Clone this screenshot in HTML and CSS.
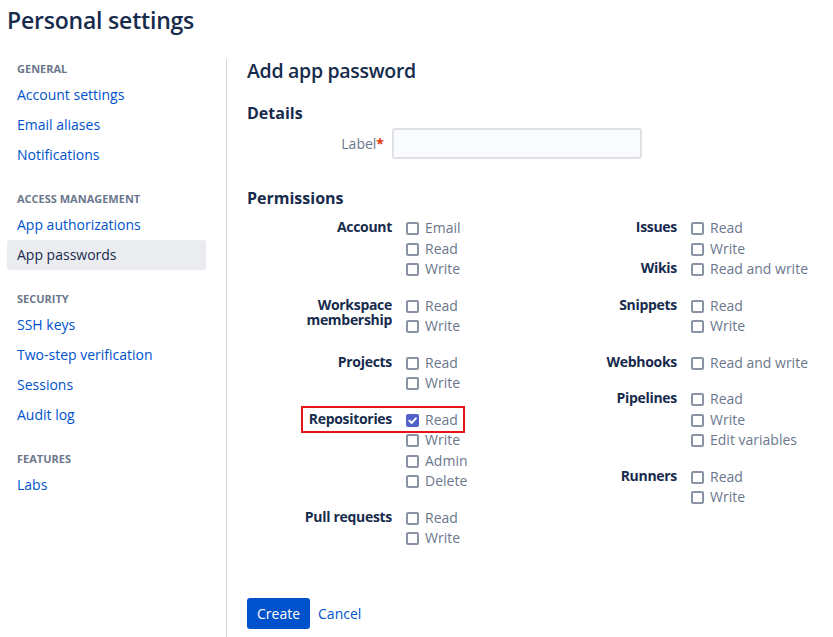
FILE: index.html
```html
<!DOCTYPE html>
<html lang="en">
<head>
<meta charset="utf-8">
<title>Personal settings</title>
<link rel="stylesheet" href="styles.css">
</head>
<body>
<div class="page">
  <h1 class="title">Personal settings</h1>
  <div class="layout">
    <nav class="sidebar">
      <div class="nav-group">
        <div class="nav-heading">General</div>
        <a class="nav-item" href="#">Account settings</a>
        <a class="nav-item" href="#">Email aliases</a>
        <a class="nav-item" href="#">Notifications</a>
      </div>
      <div class="nav-group">
        <div class="nav-heading">Access management</div>
        <a class="nav-item" href="#">App authorizations</a>
        <a class="nav-item nav-item-active" href="#">App passwords</a>
      </div>
      <div class="nav-group">
        <div class="nav-heading">Security</div>
        <a class="nav-item" href="#">SSH keys</a>
        <a class="nav-item" href="#">Two-step verification</a>
        <a class="nav-item" href="#">Sessions</a>
        <a class="nav-item" href="#">Audit log</a>
      </div>
      <div class="nav-group">
        <div class="nav-heading">Features</div>
        <a class="nav-item" href="#">Labs</a>
      </div>
    </nav>

    <main class="content">
      <h2 class="page-heading">Add app password</h2>

      <h3 class="section-title">Details</h3>
      <div class="field">
        <label class="field-label" for="label">Label<span class="req">*</span></label>
        <input class="text-input" id="label" type="text">
      </div>

      <h3 class="section-title perm-title">Permissions</h3>
      <div class="perm-grid">
        <div class="perm-col">
          <div class="perm-group">
            <div class="perm-label">Account</div>
            <div class="perm-options">
              <div class="opt"><span class="cb"></span>Email</div>
              <div class="opt"><span class="cb"></span>Read</div>
              <div class="opt"><span class="cb"></span>Write</div>
            </div>
          </div>
          <div class="perm-group">
            <div class="perm-label">Workspace membership</div>
            <div class="perm-options">
              <div class="opt"><span class="cb"></span>Read</div>
              <div class="opt"><span class="cb"></span>Write</div>
            </div>
          </div>
          <div class="perm-group">
            <div class="perm-label">Projects</div>
            <div class="perm-options">
              <div class="opt"><span class="cb"></span>Read</div>
              <div class="opt"><span class="cb"></span>Write</div>
            </div>
          </div>
          <div class="perm-group">
            <div class="highlight"></div>
            <div class="perm-label">Repositories</div>
            <div class="perm-options">
              <div class="opt"><span class="cb cb-checked"><svg viewBox="0 0 13 13" width="13" height="13"><path d="M3.3 6.7 L5.6 9 L9.9 4.3" fill="none" stroke="#fff" stroke-width="1.9" stroke-linecap="round" stroke-linejoin="round"/></svg></span>Read</div>
              <div class="opt"><span class="cb"></span>Write</div>
              <div class="opt"><span class="cb"></span>Admin</div>
              <div class="opt"><span class="cb"></span>Delete</div>
            </div>
          </div>
          <div class="perm-group">
            <div class="perm-label">Pull requests</div>
            <div class="perm-options">
              <div class="opt"><span class="cb"></span>Read</div>
              <div class="opt"><span class="cb"></span>Write</div>
            </div>
          </div>
        </div>

        <div class="perm-col">
          <div class="perm-group perm-group-tight">
            <div class="perm-label">Issues</div>
            <div class="perm-options">
              <div class="opt"><span class="cb"></span>Read</div>
              <div class="opt"><span class="cb"></span>Write</div>
            </div>
          </div>
          <div class="perm-group">
            <div class="perm-label">Wikis</div>
            <div class="perm-options">
              <div class="opt"><span class="cb"></span>Read and write</div>
            </div>
          </div>
          <div class="perm-group">
            <div class="perm-label">Snippets</div>
            <div class="perm-options">
              <div class="opt"><span class="cb"></span>Read</div>
              <div class="opt"><span class="cb"></span>Write</div>
            </div>
          </div>
          <div class="perm-group">
            <div class="perm-label">Webhooks</div>
            <div class="perm-options">
              <div class="opt"><span class="cb"></span>Read and write</div>
            </div>
          </div>
          <div class="perm-group">
            <div class="perm-label">Pipelines</div>
            <div class="perm-options">
              <div class="opt"><span class="cb"></span>Read</div>
              <div class="opt"><span class="cb"></span>Write</div>
              <div class="opt"><span class="cb"></span>Edit variables</div>
            </div>
          </div>
          <div class="perm-group">
            <div class="perm-label">Runners</div>
            <div class="perm-options">
              <div class="opt"><span class="cb"></span>Read</div>
              <div class="opt"><span class="cb"></span>Write</div>
            </div>
          </div>
        </div>
      </div>

      <div class="actions">
        <button class="btn-primary" type="button">Create</button>
        <a class="btn-link" href="#">Cancel</a>
      </div>
    </main>
  </div>
</div>
</body>
</html>
```

FILE: styles.css
```css
* {
  box-sizing: border-box;
}

html, body {
  margin: 0;
  padding: 0;
  background: #ffffff;
}

body {
  font-family: "Open Sans", "Noto Sans", "DejaVu Sans", sans-serif;
  font-size: 14px;
  color: #172B4D;
  overflow: hidden;
}

.page {
  padding: 0 7px;
}

.title {
  margin: 0 0 25px 0;
  padding-top: 6px;
  font-size: 23px;
  line-height: 28px;
  font-weight: 600;
  letter-spacing: -0.2px;
  color: #172B4D;
}

.layout {
  display: flex;
  align-items: stretch;
}

/* Sidebar */
.sidebar {
  width: 199px;
  flex-shrink: 0;
  padding-top: 2px;
  display: flex;
  flex-direction: column;
}

.nav-group + .nav-group {
  margin-top: 21px;
}

.nav-heading {
  padding-left: 10px;
  margin-bottom: 3px;
  font-size: 11px;
  line-height: 16px;
  font-weight: 700;
  text-transform: uppercase;
  color: #6B778C;
}

.nav-item {
  display: block;
  height: 30px;
  line-height: 30px;
  padding-left: 10px;
  border-radius: 3px;
  font-size: 14px;
  color: #0052CC;
  text-decoration: none;
}

.nav-item-active {
  background: #EBECF0;
  color: #172B4D;
}

/* Content */
.content {
  flex: 1;
  margin-left: 20px;
  padding-left: 20px;
  border-left: 1px solid #D2D5DB;
  min-height: 578px;
}

.page-heading {
  margin: 0 0 20px 0;
  font-size: 19.5px;
  line-height: 24px;
  font-weight: 600;
  letter-spacing: -0.3px;
  color: #172B4D;
}

.section-title {
  margin: 0;
  font-size: 16px;
  line-height: 20px;
  font-weight: 700;
  color: #172B4D;
}

.field {
  display: flex;
  align-items: center;
  margin-top: 5px;
  height: 31px;
}

.field-label {
  width: 137px;
  text-align: right;
  font-size: 14px;
  line-height: 31px;
  color: #6B778C;
}

.req {
  color: #DE350B;
  font-weight: 700;
}

.text-input {
  margin: 0 0 0 8px;
  width: 250px;
  height: 31px;
  background: #FAFBFC;
  border: 2px solid #DFE1E6;
  border-radius: 3px;
  outline: none;
  font-family: inherit;
  font-size: 14px;
  padding: 0 6px;
}

.perm-title {
  margin-top: 29px;
}

.perm-grid {
  display: grid;
  grid-template-columns: 285px 1fr;
  margin-top: 8px;
}

.perm-col {
  display: flex;
  flex-direction: column;
}

.perm-group {
  position: relative;
  display: flex;
  margin-bottom: 16px;
}

.perm-group:last-child {
  margin-bottom: 0;
}

.perm-group-tight {
  margin-bottom: 0;
}

.perm-label {
  width: 145px;
  flex-shrink: 0;
  padding-top: 3px;
  text-align: right;
  font-size: 14px;
  line-height: 15px;
  font-weight: 700;
  letter-spacing: -0.3px;
  color: #172B4D;
}

.perm-options {
  margin-left: 14px;
  display: flex;
  flex-direction: column;
}

.opt {
  display: flex;
  align-items: flex-start;
  height: 20.5px;
  padding-top: 4px;
  line-height: 16.5px;
  font-size: 14px;
  color: #6B778C;
  white-space: nowrap;
}

.cb {
  display: block;
  flex-shrink: 0;
  width: 13px;
  height: 13px;
  margin-top: 2px;
  margin-right: 6px;
  border: 2px solid #8993A4;
  border-radius: 2px;
  background: #ffffff;
}

.cb-checked {
  border: none;
  background: #5262C8;
}

.cb-checked svg {
  display: block;
}

.highlight {
  position: absolute;
  left: 54px;
  top: -2px;
  width: 164px;
  height: 27px;
  border: 2px solid #E3151B;
  pointer-events: none;
}

.actions {
  display: flex;
  align-items: center;
  margin-top: 51px;
}

.btn-primary {
  height: 31px;
  padding: 0 10px;
  border: none;
  border-radius: 3px;
  background: #0052CC;
  color: #ffffff;
  font-family: inherit;
  font-size: 14px;
  line-height: 31px;
  cursor: pointer;
}

.btn-link {
  margin-left: 8px;
  font-size: 14px;
  color: #0052CC;
  text-decoration: none;
}
```
